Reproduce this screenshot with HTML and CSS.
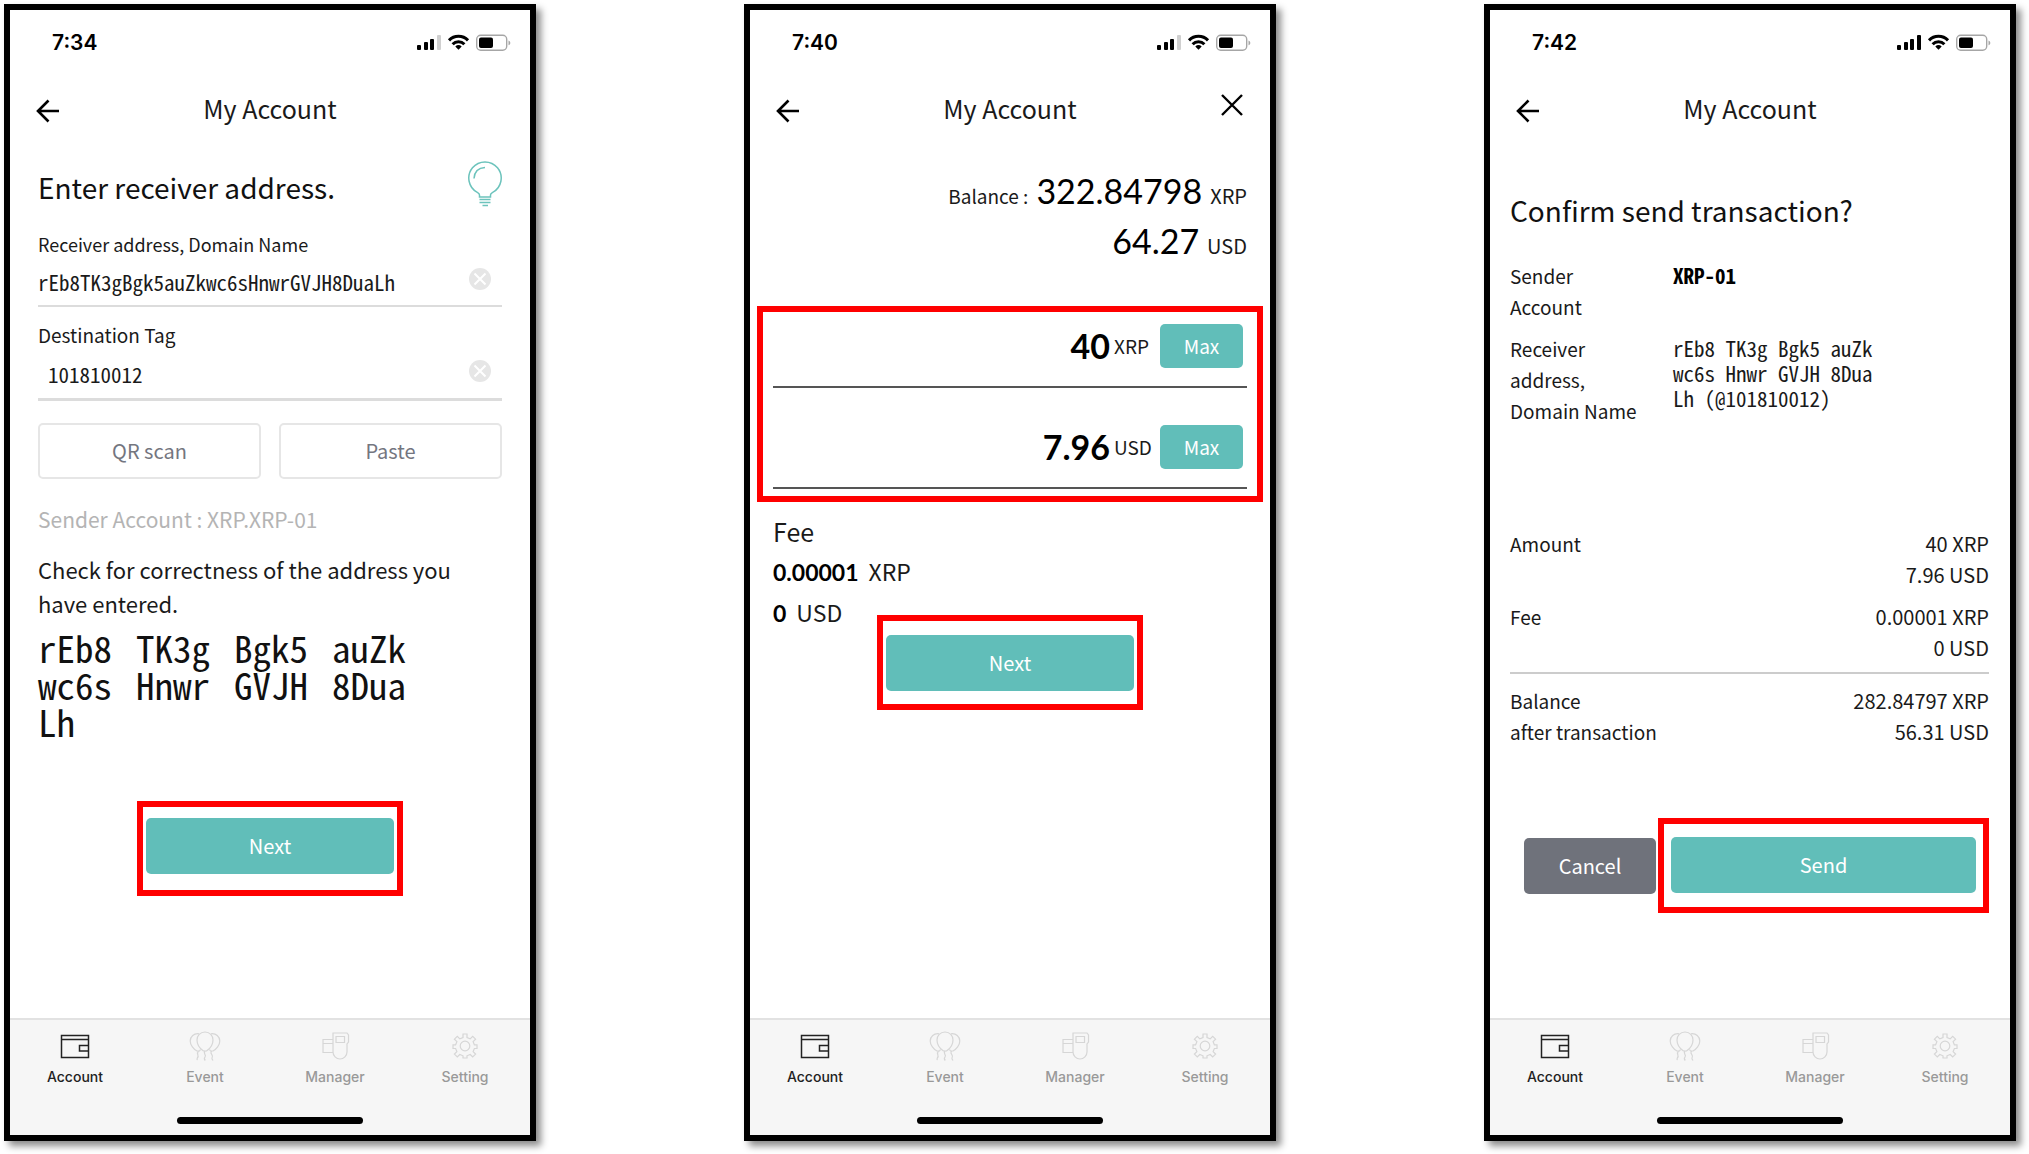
FILE: index.html
```html
<!DOCTYPE html>
<html lang="en">
<head>
<meta charset="utf-8">
<meta name="viewport" content="width=device-width, initial-scale=1">
<title>My Account – Send XRP</title>
<link rel="stylesheet" href="styles.css">
</head>
<body>
<svg class="sprite" aria-hidden="true">
  <symbol id="i-status" viewBox="0 0 94 18">
    <rect x="0" y="11" width="4" height="5" rx="1"/>
    <rect x="7" y="8" width="4" height="8" rx="1"/>
    <rect x="13" y="5" width="4" height="11" rx="1"/>
    <rect class="last-bar" x="20" y="1" width="4" height="15" rx="1"/>
    <g fill="none" stroke="currentColor" stroke-width="3">
      <path d="M32 6.4a13.2 13.2 0 0 1 19 0"/>
      <path d="M35.6 10.2a8.2 8.2 0 0 1 11.800 0"/>
    </g>
    <path d="M38.300 12.500a4.800 4.800 0 0 1 6.400 0l-3.200 3.300z"/>
    <rect x="59.700" y="1.200" width="30" height="15" rx="4" fill="none" stroke="#a6a6a6" stroke-width="1.400"/>
    <rect x="62" y="3.500" width="14" height="10.500" rx="2"/>
    <path d="M91.500 6.500c2.400.8 2.400 4 0 4.800z" fill="#a6a6a6"/>
  </symbol>
  <symbol id="i-back" viewBox="0 0 24 30"><path d="M23 18H2M12.500 7.500L2 18l10.500 10.500" fill="none" stroke="currentColor" stroke-width="2.600"/></symbol>
  <symbol id="i-close" viewBox="0 0 24 24"><path d="M2 2l20 20M22 2L2 22" fill="none" stroke="currentColor" stroke-width="2.400"/></symbol>
  <symbol id="i-clear" viewBox="0 0 24 24"><circle cx="12" cy="12" r="11" fill="#e6e6e6"/><path d="M6.500 6.500l11 11M17.500 6.500l-11 11" stroke="#fff" stroke-width="2"/></symbol>
  <symbol id="i-bulb" viewBox="1 0 34 46">
    <g fill="none" stroke="#6cc3bc" stroke-width="1.500">
      <path d="M12.500 36v-2c0-1.200-.8-1.800-2.200-2.600a16.200 16.200 0 1 1 15.400 0c-1.400.8-2.200 1.400-2.200 2.600v2z"/>
      <path d="M7 17.500C7.500 11 11.500 6.800 18 6.500"/>
      <path d="M12.500 38.500h11M12.500 41.500h11M15.500 44.500h5.500"/>
    </g>
  </symbol>
  <symbol id="i-wallet" viewBox="0 0 32 32"><g fill="none" stroke="currentColor" stroke-width="1.500"><path d="M2.500 5.500h27v22h-27zM2.500 9.500h27"/><path d="M29.500 15.500h-9v5.500h9"/></g></symbol>
  <symbol id="i-balloons" viewBox="0 0 32 32"><g fill="none" stroke="currentColor" stroke-width="1.200">
    <path d="M16 2c4.800 0 8 3.600 8 8 0 4.600-3.500 9-6.500 11h-3C11.500 19 8 14.600 8 10c0-4.400 3.200-8 8-8z"/>
    <path d="M10 3.800C5 3 1.200 6.600 1.200 11c0 4 3.500 8.500 6.800 10h2.500l1-1.500"/>
    <path d="M22 3.800c5-.8 8.800 2.800 8.800 7.200 0 4-3.500 8.500-6.800 10h-2.500l-1-1.500"/>
    <path d="M16 21c-2.500 3 2 3.500 0 6-1 1.200-.6 2.500.3 3.500M9.500 21c-3 3.500 1.500 4-1.200 7-.5.800-.3 1.500.2 2M22.500 21c-2.500 3.500 3 4 .5 7-.5.800.2 1.500 1 2.500"/>
  </g></symbol>
  <symbol id="i-manager" viewBox="0 0 32 32"><g fill="none" stroke="currentColor" stroke-width="1.200">
    <path d="M14 3h14l1.500 2v7L28 14v8a7 7 0 0 1-14 0z"/>
    <path d="M17 6.500h8.500v6H17z"/>
    <path d="M14 9.500H4v13h10M4 13.500h10"/>
  </g></symbol>
  <symbol id="i-gear" viewBox="0 0 32 32"><g fill="none" stroke="currentColor" stroke-width="1.200">
    <circle cx="16" cy="16" r="4.800"/>
    <path d="M14 4h4v3.500l3.200 1.300 2.500-2.500 2.900 2.900-2.500 2.500 1.300 3.100H28v3.700h-2.600l-1.300 3.100 2.500 2.500-2.900 2.900-2.500-2.500-3.200 1.300V28h-4v-2.200l-3.200-1.300L8.300 27l-2.900-2.900 2.500-2.500-1.300-3.100H4v-3.700h2.600l1.300-3.100-2.500-2.500 2.900-2.900 2.500 2.500L14 7.500z"/>
  </g></symbol>
</svg>

<main class="board">
  <section class="phone">
    <div class="status"><span>7:34</span><svg class="status-icons"><use href="#i-status"/></svg></div>
    <header class="topbar">
      <button class="icon-btn back" aria-label="Back"><svg><use href="#i-back"/></svg></button>
      <h1>My Account</h1>
    </header>
    <form class="content receiver">
      <div class="heading-row">
        <h2>Enter receiver address.</h2>
        <svg class="bulb"><use href="#i-bulb"/></svg>
      </div>
      <label class="field-label" for="address">Receiver address, Domain Name</label>
      <div class="field">
        <input id="address" class="mono" type="text" value="rEb8TK3gBgk5auZkwc6sHnwrGVJH8DuaLh">
        <button type="button" class="icon-btn clear" aria-label="Clear address"><svg><use href="#i-clear"/></svg></button>
      </div>
      <label class="field-label tag-label" for="tag">Destination Tag</label>
      <div class="field tag-field">
        <input id="tag" class="mono" type="text" value="101810012">
        <button type="button" class="icon-btn clear" aria-label="Clear tag"><svg><use href="#i-clear"/></svg></button>
      </div>
      <div class="pair">
        <button type="button" class="btn outline">QR scan</button>
        <button type="button" class="btn outline">Paste</button>
      </div>
      <p class="sender">Sender Account : XRP.XRP-01</p>
      <p class="check">Check for correctness of the address you have entered.</p>
      <div class="address-big mono">
        <span>rEb8</span><span>TK3g</span><span>Bgk5</span><span>auZk</span>
        <span>wc6s</span><span>Hnwr</span><span>GVJH</span><span>8Dua</span>
        <span>Lh</span>
      </div>
      <div class="highlight next-box"><button type="button" class="btn primary">Next</button></div>
    </form>
    <nav class="tabs">
      <a class="tab active" href="#account"><svg><use href="#i-wallet"/></svg>Account</a>
      <a class="tab" href="#event"><svg><use href="#i-balloons"/></svg>Event</a>
      <a class="tab" href="#manager"><svg><use href="#i-manager"/></svg>Manager</a>
      <a class="tab" href="#setting"><svg><use href="#i-gear"/></svg>Setting</a>
      <span class="home-bar"></span>
    </nav>
  </section>

  <section class="phone">
    <div class="status"><span>7:40</span><svg class="status-icons"><use href="#i-status"/></svg></div>
    <header class="topbar">
      <button class="icon-btn back" aria-label="Back"><svg><use href="#i-back"/></svg></button>
      <h1>My Account</h1>
      <button class="icon-btn close" aria-label="Close"><svg><use href="#i-close"/></svg></button>
    </header>
    <form class="content amount">
      <p class="balance"><span class="balance-label">Balance :</span> <b>322.84798</b> <span>XRP</span></p>
      <p class="balance"><b>64.27</b> <span>USD</span></p>
      <div class="highlight amount-box">
        <div class="amount-row">
          <input id="xrp" type="text" value="40">
          <label for="xrp">XRP</label>
          <button type="button" class="btn primary max">Max</button>
        </div>
        <div class="amount-row second">
          <input id="usd" type="text" value="7.96">
          <label for="usd">USD</label>
          <button type="button" class="btn primary max">Max</button>
        </div>
      </div>
      <h3>Fee</h3>
      <p class="fee"><b>0.00001</b>XRP</p>
      <p class="fee"><b>0</b>USD</p>
      <div class="highlight next-box raised"><button type="button" class="btn primary">Next</button></div>
    </form>
    <nav class="tabs">
      <a class="tab active" href="#account"><svg><use href="#i-wallet"/></svg>Account</a>
      <a class="tab" href="#event"><svg><use href="#i-balloons"/></svg>Event</a>
      <a class="tab" href="#manager"><svg><use href="#i-manager"/></svg>Manager</a>
      <a class="tab" href="#setting"><svg><use href="#i-gear"/></svg>Setting</a>
      <span class="home-bar"></span>
    </nav>
  </section>

  <section class="phone full-signal">
    <div class="status"><span>7:42</span><svg class="status-icons"><use href="#i-status"/></svg></div>
    <header class="topbar">
      <button class="icon-btn back" aria-label="Back"><svg><use href="#i-back"/></svg></button>
      <h1>My Account</h1>
    </header>
    <form class="content confirm">
      <h2>Confirm send transaction?</h2>
      <dl class="parties">
        <dt>Sender<br>Account</dt>
        <dd class="mono strong">XRP-01</dd>
        <dt>Receiver<br>address,<br>Domain Name</dt>
        <dd class="mono">rEb8 TK3g Bgk5 auZk<br>wc6s Hnwr GVJH 8Dua<br>Lh (@101810012)</dd>
      </dl>
      <dl class="sums">
        <dt>Amount</dt>
        <dd>40 XRP<br>7.96 USD</dd>
        <dt>Fee</dt>
        <dd>0.00001 XRP<br>0 USD</dd>
      </dl>
      <dl class="sums total">
        <dt>Balance<br>after transaction</dt>
        <dd>282.84797 XRP<br>56.31 USD</dd>
      </dl>
      <div class="actions">
        <button type="button" class="btn cancel">Cancel</button>
        <div class="highlight send-box"><button type="button" class="btn primary">Send</button></div>
      </div>
    </form>
    <nav class="tabs">
      <a class="tab active" href="#account"><svg><use href="#i-wallet"/></svg>Account</a>
      <a class="tab" href="#event"><svg><use href="#i-balloons"/></svg>Event</a>
      <a class="tab" href="#manager"><svg><use href="#i-manager"/></svg>Manager</a>
      <a class="tab" href="#setting"><svg><use href="#i-gear"/></svg>Setting</a>
      <span class="home-bar"></span>
    </nav>
  </section>
</main>
</body>
</html>
```
FILE: styles.css
```css
* { box-sizing: border-box; }

body {
  margin: 0;
  background: #fff;
  color: #1a1a1a;
  font: 20px/30px "Noto Sans CJK KR", "Noto Sans CJK SC", "Noto Sans", sans-serif;
}

h1, h2, h3, p, dl, dd { margin: 0; font-weight: 400; }
button, input { font: inherit; color: inherit; background: none; border: 0; padding: 0; margin: 0; }
button { cursor: pointer; }
svg { display: block; fill: currentColor; }
.sprite { position: absolute; width: 0; height: 0; }
.mono { font-family: "Noto Sans Mono CJK KR", "Noto Sans Mono CJK SC", "Liberation Mono", monospace; }

.board {
  display: grid;
  grid-template-columns: repeat(3, 1fr);
  gap: 208px;
  min-height: 100vh;
  padding: 4px 13px 13px 4px;
}

.phone {
  display: flex;
  flex-direction: column;
  min-width: 0;
  border: 6px solid #000;
  background: #fff;
  box-shadow: 5px 5px 7px rgba(0, 0, 0, 0.45);
}

/* status bar and title */
.status {
  --bar: #d0d0d0;
  display: flex;
  align-items: center;
  justify-content: space-between;
  height: 65px;
  padding: 0 19px 0 42px;
  color: #000;
  font: 600 21px/30px Inter, sans-serif;
}
.status-icons { width: 94px; height: 18px; }
.full-signal .status { --bar: #000; }
.last-bar { fill: var(--bar); }

.topbar {
  display: grid;
  grid-template-columns: 40px 1fr 40px;
  align-items: center;
  height: 65px;
  padding: 0 26px;
}
h1 { grid-column: 2; grid-row: 1; text-align: center; font-size: 25px; line-height: 40px; }
.icon-btn { display: block; }
.back { grid-column: 1; grid-row: 1; color: #000; }
.back svg { width: 24px; height: 30px; }
.close { grid-column: 3; grid-row: 1; justify-self: end; margin-bottom: 6px; color: #000; }
.close svg { width: 24px; height: 24px; }

.content { flex: 1; color: #1a1a1a; }
h2 { font-size: 28px; line-height: 40px; color: #111; }

/* buttons */
.btn { height: 56px; border-radius: 5px; font-size: 20px; line-height: 30px; }
.primary { width: 100%; background: #61beb9; color: #fff; }
.outline { border: 2px solid #e6e6e6; color: #74767f; }
.cancel { background: #6f727b; color: #fff; }
.highlight { border: 6px solid #f00; }
.next-box { width: 266px; margin: 61px auto 0; padding: 11px 3px 16px; }
.next-box .btn, .send-box .btn { display: block; }

/* receiver screen */
.receiver { padding: 21px 28px 0; }
.heading-row { display: flex; align-items: flex-end; justify-content: space-between; height: 46px; }
.bulb { width: 34px; height: 46px; }
.field-label { display: block; margin-top: 23px; font-size: 18px; line-height: 28px; }
.tag-label { margin-top: 14px; font-size: 19px; }
.field {
  display: flex;
  align-items: center;
  height: 49px;
  padding-right: 10px;
  border-bottom: 2px solid #dcdcdc;
}
.field input { flex: 1; min-width: 0; height: 40px; font-size: 21px; outline: 0; }
.tag-field { height: 52px; border-bottom-width: 3px; padding-left: 10px; }
.clear { margin-bottom: 5px; }
.clear svg { width: 24px; height: 24px; }
.pair { display: grid; grid-template-columns: 1fr 1fr; gap: 18px; margin-top: 22px; }
.sender { margin-top: 25px; color: #b4b4b4; font-size: 21px; }
.check { margin-top: 18px; font-size: 22px; line-height: 34px; }
.address-big {
  display: grid;
  grid-template-columns: repeat(4, 98px);
  margin-top: 9px;
  font-size: 37px;
  line-height: 37px;
  color: #111;
}

/* amount screen */
.amount { padding: 26px 23px 0; }
.balance { display: flex; justify-content: flex-end; align-items: baseline; gap: 8px; height: 50px; font-size: 20px; line-height: 30px; }
.balance b { font: 400 34px/50px Lato, sans-serif; color: #000; }
.balance-label { font-size: 19px; }
.amount-box { margin: 40px -16px 0; padding: 0 10px 7px; }
.amount-row {
  display: grid;
  grid-template-columns: 1fr 46px 83px;
  align-items: center;
  padding: 12px 4px 18px 0;
  border-bottom: 2px solid #555;
  font-size: 19px;
}
.amount-row.second { padding-top: 37px; }
.amount-row input {
  min-width: 0;
  height: 44px;
  padding-right: 4px;
  text-align: right;
  font: 700 34px/44px Lato, sans-serif;
  color: #000;
  outline: 0;
}
.max { height: 44px; font-size: 19px; }
h3 { margin-top: 9px; font-size: 25px; line-height: 40px; }
.fee { display: flex; align-items: baseline; gap: 10px; font-size: 23px; line-height: 40px; }
.fee b { font-family: Lato, sans-serif; color: #000; }
.next-box.raised { margin-top: -18px; padding: 14px 3px 13px; }

/* confirmation screen */
.confirm { padding: 50px 21px 0 20px; font-size: 20px; line-height: 31px; }
.confirm dt { font-size: 19px; }
.parties { display: grid; grid-template-columns: 163px 1fr; row-gap: 11px; margin-top: 30px; }
.parties dd { font-size: 21px; line-height: 25px; padding-top: 3px; }
.strong { font-weight: 700; color: #000; }
.sums { display: grid; grid-template-columns: auto 1fr; row-gap: 11px; margin-top: 102px; text-align: right; }
.sums dt { text-align: left; }
.total { margin-top: 9px; padding-top: 11px; border-top: 2px solid #ccc; }
.actions { display: flex; align-items: center; gap: 2px; margin-top: 71px; padding-left: 14px; }
.cancel { width: 132px; }
.send-box { flex: 1; padding: 13px 7px 14px; }

/* tab bar */
.tabs {
  display: grid;
  grid-template-columns: repeat(4, 1fr);
  justify-items: center;
  align-content: space-between;
  height: 117px;
  padding: 10px 0 11px;
  border-top: 2px solid #e2e2e2;
  background: #f6f6f6;
}
.tab {
  display: flex;
  flex-direction: column;
  align-items: center;
  gap: 5px;
  color: #999;
  font: 500 14px/20px Inter, sans-serif;
  text-decoration: none;
}
.tab svg { width: 32px; height: 32px; color: #d6d6d6; }
.tab.active, .tab.active svg { color: #222; }
.home-bar { grid-column: 1 / -1; width: 186px; height: 7px; border-radius: 4px; background: #000; }
```
